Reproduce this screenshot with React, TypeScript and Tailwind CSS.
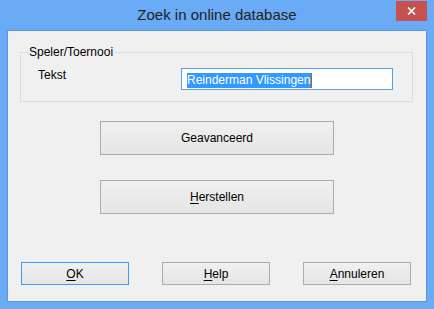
const BTN =
  'flex items-center justify-center border bg-gradient-to-b from-[#f0f0f0] to-[#e5e5e5] text-[12px] text-black';

function Button({ label, mnemonic, w, h, focused }: { label: string; mnemonic?: number; w: string; h: string; focused?: boolean }) {
  const i = mnemonic ?? -1;
  return (
    <button className={`${BTN} ${w} ${h} ${focused ? 'border-[#3c9cf2]' : 'border-[#acacac]'}`}>
      {i >= 0 ? (
        <span>
          {label.slice(0, i)}
          <u className="underline-offset-[2px]">{label[i]}</u>
          {label.slice(i + 1)}
        </span>
      ) : (
        label
      )}
    </button>
  );
}

export default function App() {
  return (
    <div
      className="w-[434px] h-[309px] bg-[#6aabf5] flex flex-col"
      style={{ fontFamily: '"Liberation Sans", Arial, sans-serif' }}
    >
      {/* titelbalk */}
      <div className="relative h-[30px] shrink-0 flex items-center justify-center">
        <span className="text-[15px] text-[#222] pt-[1px]">Zoek in online database</span>
        <div className="absolute left-[396px] top-[1px] w-[31px] h-[20px] bg-[#c75050] flex items-center justify-center">
          <svg width="9" height="8" viewBox="0 0 9 8">
            <path d="M1 0.5 L8 7.5 M8 0.5 L1 7.5" stroke="#fff" strokeWidth="1.7" />
          </svg>
        </div>
      </div>

      {/* client */}
      <div className="ml-[7px] w-[420px] h-[272px] border border-[#5b97e0] bg-[#f0f0f0] flex flex-col text-[12px] text-black">
        <fieldset className="ml-[12px] mt-[14px] w-[393px] border border-[#dcdcdc] pb-[11px]">
          <legend className="ml-[7px] px-[1px] leading-[14px]">Speler/Toernooi</legend>
          <div className="flex items-start pl-[17px] mt-[9px]">
            <span className="w-[143px] leading-[16px] -mt-[1px]">Tekst</span>
            <div className="w-[212px] h-[22px] border border-[#569de5] bg-white pl-[5px] pt-[2px]">
              <span className="inline-block bg-[#3399ff] text-white leading-[15px] pr-[1px] border-r border-[#c55a11]">
                Reinderman Vlissingen
              </span>
            </div>
          </div>
        </fieldset>

        <div className="ml-[92px] mt-[19px]">
          <Button label="Geavanceerd" w="w-[234px]" h="h-[34px]" />
        </div>
        <div className="ml-[92px] mt-[25px]">
          <Button label="Herstellen" mnemonic={0} w="w-[234px]" h="h-[34px]" />
        </div>

        <div className="flex gap-[33px] pl-[13px] mt-[48px]">
          <Button label="OK" mnemonic={0} w="w-[108px]" h="h-[23px]" focused />
          <Button label="Help" mnemonic={0} w="w-[108px]" h="h-[23px]" />
          <Button label="Annuleren" mnemonic={0} w="w-[108px]" h="h-[23px]" />
        </div>
      </div>
    </div>
  );
}
